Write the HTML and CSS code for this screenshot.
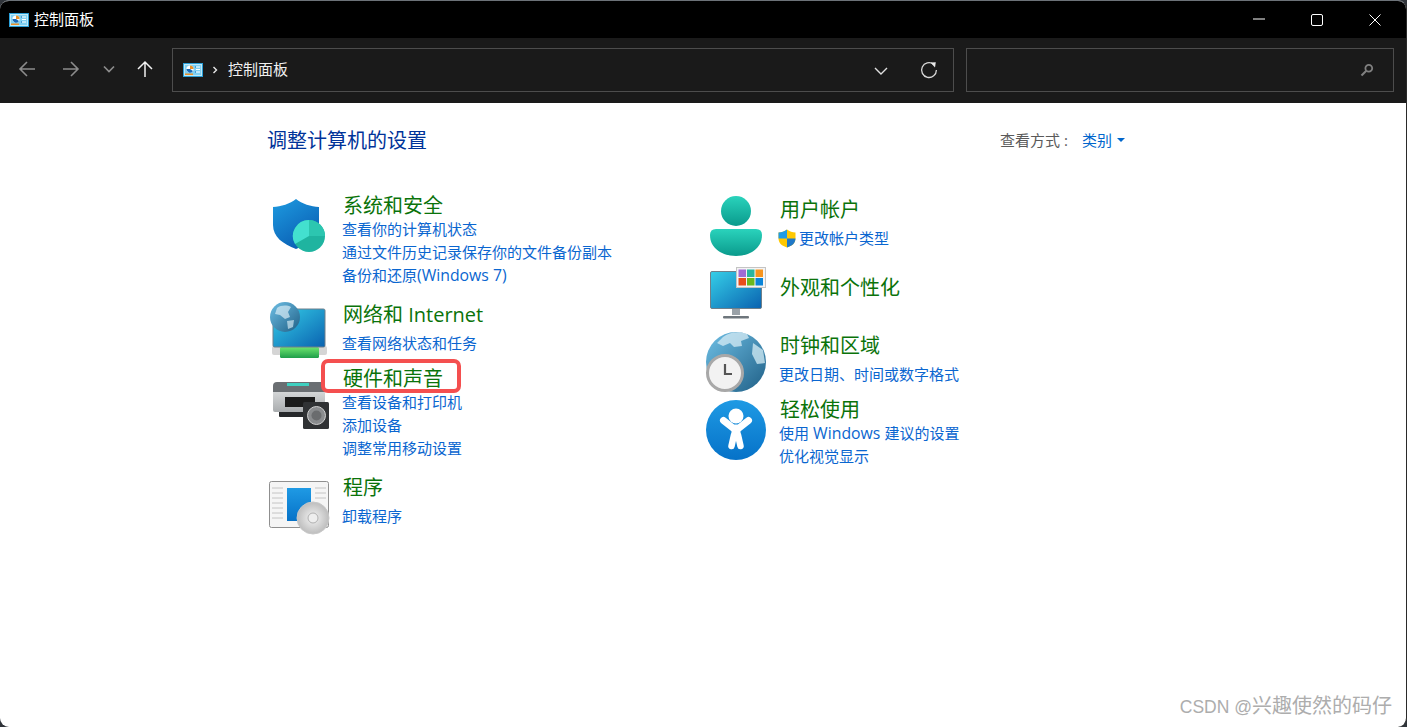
FILE: index.html
```html
<!DOCTYPE html>
<html lang="zh-CN">
<head>
<meta charset="utf-8">
<title>控制面板</title>
<link rel="stylesheet" href="styles.css">
</head>
<body>
<svg class="defs" width="0" height="0">
  <defs>
    <symbol id="cp" viewBox="0 0 20 14">
      <rect x="0.5" y="0.5" width="19" height="13" fill="#bfe9f8" stroke="#2a9fd8"/>
      <rect x="2" y="2" width="16" height="10" fill="#7fd0f2"/>
      <circle cx="7" cy="6" r="3.6" fill="#fff"/>
      <path d="M7 6V2.4A3.6 3.6 0 0 1 10.6 6Z" fill="#e8902a"/>
      <path d="M7 6H3.4A3.6 3.6 0 0 0 10 8Z" fill="#1668b8"/>
      <rect x="2" y="10.5" width="8" height="1.5" fill="#e8902a"/>
      <path d="M13 4h4M13 6.5h4M13 9h4" stroke="#fff"/>
      <path d="M12 4h1M12 9h1" stroke="#1668b8"/>
    </symbol>
    <linearGradient id="gShield" x1="0" y1="0" x2="0.6" y2="1"><stop offset="0" stop-color="#1e9be0"/><stop offset="1" stop-color="#0a5fb4"/></linearGradient>
    <linearGradient id="gTeal" x1="0" y1="0" x2="0" y2="1"><stop offset="0" stop-color="#2ad3bc"/><stop offset="1" stop-color="#0a9a8c"/></linearGradient>
    <linearGradient id="gScreen" x1="0" y1="0" x2="1" y2="1"><stop offset="0" stop-color="#35cfe8"/><stop offset="1" stop-color="#0a62b0"/></linearGradient>
    <linearGradient id="gGlobe" x1="0" y1="0" x2="1" y2="1"><stop offset="0" stop-color="#6fc0e6"/><stop offset="1" stop-color="#1f5f86"/></linearGradient>
    <linearGradient id="gBlue" x1="0" y1="0" x2="0" y2="1"><stop offset="0" stop-color="#1f9ae4"/><stop offset="1" stop-color="#0672c8"/></linearGradient>
    <linearGradient id="gGreen" x1="0" y1="0" x2="0" y2="1"><stop offset="0" stop-color="#6ee66e"/><stop offset="1" stop-color="#1f9e4a"/></linearGradient>
    <linearGradient id="gBody" x1="0" y1="0" x2="0" y2="1"><stop offset="0" stop-color="#d8dadb"/><stop offset="1" stop-color="#a9acae"/></linearGradient>
    <radialGradient id="gCd"><stop offset="0" stop-color="#f4f4f4"/><stop offset="1" stop-color="#bdbdbd"/></radialGradient>
  </defs>
</svg>
<div class="window">
  <header class="titlebar">
    <svg class="cp-icon"><use href="#cp"/></svg>
    <span class="title-text">控制面板</span>
    <div class="win-controls">
      <svg class="wc" viewBox="0 0 14 14"><path d="M1 6H13" stroke="#fff"/></svg>
      <svg class="wc" viewBox="0 0 14 14"><rect x="1.5" y="1.5" width="11" height="11" rx="1.5" fill="none" stroke="#fff"/></svg>
      <svg class="wc" viewBox="0 0 14 14"><path d="M1.5 1.5L12.5 12.5M12.5 1.5L1.5 12.5" stroke="#fff"/></svg>
    </div>
  </header>
  <nav class="navbar">
    <div class="nav-buttons">
      <svg class="nav-ico" viewBox="0 0 18 18"><path d="M17 9H2M9 2L2 9L9 16" fill="none" stroke="#8c8c8c" stroke-width="1.6"/></svg>
      <svg class="nav-ico" viewBox="0 0 18 18"><path d="M1 9H16M9 2L16 9L9 16" fill="none" stroke="#8c8c8c" stroke-width="1.6"/></svg>
      <svg class="nav-ico small" viewBox="0 0 12 12"><path d="M1 3.5L6 8.5L11 3.5" fill="none" stroke="#8c8c8c" stroke-width="1.7"/></svg>
      <svg class="nav-ico" viewBox="0 0 18 18"><path d="M9 17V2M2 9L9 2L16 9" fill="none" stroke="#f2f2f2" stroke-width="1.5"/></svg>
    </div>
    <div class="address">
      <svg class="cp-icon addr-icon"><use href="#cp"/></svg>
      <svg class="crumb" viewBox="0 0 6 8"><path d="M1.5 1L4.5 4L1.5 7" fill="none" stroke="#e8e8e8" stroke-width="1.4"/></svg>
      <span class="addr-text">控制面板</span>
      <svg class="addr-drop" viewBox="0 0 14 8"><path d="M1 1L7 7L13 1" fill="none" stroke="#e0e0e0" stroke-width="1.4"/></svg>
      <svg class="addr-refresh" viewBox="0 0 18 18"><path d="M13.5 3.2A7.4 7.4 0 1 0 16.4 9" fill="none" stroke="#d8d8d8" stroke-width="1.3"/><path d="M10.5 1.5L15.8 1.2L15 6.4Z" fill="#e8e8e8"/></svg>
    </div>
    <div class="search">
      <svg class="search-ico" viewBox="0 0 14 14"><circle cx="8.8" cy="5.2" r="3.4" fill="none" stroke="#808080" stroke-width="1.8"/><path d="M6.3 7.7L1.5 12.5" stroke="#808080" stroke-width="2"/></svg>
    </div>
  </nav>
  <main class="content">
    <div class="head-row">
      <h1 class="page-title">调整计算机的设置</h1>
      <div class="view-by">
        <span class="view-label">查看方式<span class="colon">:</span></span>
        <a class="view-link">类别</a>
        <span class="view-caret"></span>
      </div>
    </div>
    <div class="columns">
      <section class="col col-left">
        <article class="item">
          <div class="icon"><svg viewBox="0 0 75 70">
            <path d="M29 6C23 11 14 13.500 6 14V32C6 44 16 51 29 56C42 51 52 44 52 32V14C44 13.500 35 11 29 6Z" fill="url(#gShield)"/>
            <circle cx="42" cy="43" r="16" fill="#1fb4a0"/>
            <path d="M42 43V27A16 16 0 0 0 28 51Z" fill="#43e0cf"/>
            <path d="M42 43V27A16 16 0 0 1 58 43Z" fill="#2cc6b0"/>
          </svg></div>
          <div class="text">
            <a class="heading">系统和安全</a>
            <a class="link">查看你的计算机状态</a>
            <a class="link">通过文件历史记录保存你的文件备份副本</a>
            <a class="link">备份和还原<span class="latin">(Windows 7)</span></a>
          </div>
        </article>
        <article class="item single gap16">
          <div class="icon"><svg viewBox="0 0 75 70">
            <rect x="5" y="44" width="55" height="9" rx="2" fill="#d5d5d5"/>
            <rect x="13" y="45" width="39" height="11" rx="1.500" fill="url(#gGreen)"/>
            <rect x="6" y="7" width="52" height="38" rx="1.500" fill="url(#gScreen)" stroke="#6f7f8a"/>
            <circle cx="18" cy="15" r="15" fill="url(#gGlobe)"/>
            <path d="M10 6C14 3 20 3 24 5L21 10L23 15L18 17L13 13L8 12Z" fill="#e4f3fa" opacity=".65"/>
            <path d="M20 19L27 18L26 25L21 27Z" fill="#dceef6" opacity=".65"/>
          </svg></div>
          <div class="text">
            <a class="heading">网络和 Internet</a>
            <a class="link">查看网络状态和任务</a>
          </div>
        </article>
        <article class="item gap12">
          <div class="icon"><svg viewBox="0 0 75 70">
            <rect x="12" y="44" width="40" height="7" rx="1" fill="#26282a"/>
            <rect x="6" y="24" width="52" height="22" rx="2" fill="url(#gBody)"/>
            <path d="M6 26V20Q6 16 10 16H54Q58 16 58 20V26Z" fill="#6a6e72"/>
            <rect x="20" y="17" width="22" height="3" fill="#3fd0c0"/>
            <rect x="18" y="31" width="30" height="10" fill="#1c1c1c"/>
            <rect x="36" y="36" width="26" height="27" rx="1.500" fill="#303234"/>
            <circle cx="49.500" cy="49.500" r="9" fill="#8a8c8e" stroke="#d0d0d0"/>
            <circle cx="49.500" cy="49.500" r="5" fill="#6a6c6e"/>
          </svg></div>
          <div class="text">
            <a class="heading">硬件和声音<span class="marker"></span></a>
            <a class="link">查看设备和打印机</a>
            <a class="link">添加设备</a>
            <a class="link">调整常用移动设置</a>
          </div>
        </article>
        <article class="item single gap16">
          <div class="icon"><svg viewBox="0 0 75 70">
            <rect x="2.500" y="6.500" width="59" height="46" rx="2" fill="#f5f5f5" stroke="#8f8f8f"/>
            <path d="M5 13H16M5 18H16M5 23H16M5 28H16M5 33H16M5 38H16M5 43H16M48 13H59M48 18H59M48 23H59" stroke="#c4c4c4"/>
            <rect x="20" y="13" width="24" height="33" fill="url(#gBlue)"/>
            <circle cx="46" cy="43" r="16" fill="url(#gCd)" stroke="#c8c8c8"/>
            <circle cx="46" cy="43" r="5" fill="#eee" stroke="#b0b0b0"/>
          </svg></div>
          <div class="text">
            <a class="heading">程序</a>
            <a class="link">卸载程序</a>
          </div>
        </article>
      </section>
      <section class="col col-right">
        <article class="item single">
          <div class="icon"><svg viewBox="0 0 75 70">
            <circle cx="31" cy="14" r="15" fill="url(#gTeal)"/>
            <path d="M5 38Q5 32 11 32H51Q57 32 57 38C57 52 44 59 31 59C18 59 5 52 5 38Z" fill="url(#gTeal)"/>
          </svg></div>
          <div class="text">
            <a class="heading">用户帐户</a>
            <a class="link has-icon"><svg class="uac" viewBox="0 0 18 19"><path d="M9 0.500C6.500 2.500 3.500 3.300 0.500 3.500V9.500C0.500 14 4 17 9 18.500C14 17 17.500 14 17.500 9.500V3.500C14.500 3.300 11.500 2.500 9 0.500Z" fill="#ffc800"/><path d="M9 0.500V9.500H0.500V3.500C3.500 3.300 6.500 2.500 9 0.500Z" fill="#1f9be6"/><path d="M9 9.500V18.500C14 17 17.500 14 17.500 9.500Z" fill="#1f78c8"/></svg>更改帐户类型</a>
          </div>
        </article>
        <article class="item heading-only gap26">
          <div class="icon"><svg viewBox="0 0 75 70">
            <rect x="5.500" y="-3.500" width="51" height="37" rx="1.500" fill="url(#gScreen)" stroke="#6f7f8a"/>
            <rect x="27" y="34" width="8" height="6" fill="#9aa2a8"/>
            <rect x="18" y="41" width="26" height="2.500" rx="1" fill="#6e767c"/>
            <rect x="31.500" y="-7.500" width="29" height="20" fill="#f4f4f4" stroke="#c4c4c4"/>
            <rect x="33.500" y="-5.500" width="7.500" height="7.500" fill="#a06cd5"/>
            <rect x="42" y="-5.500" width="7.500" height="7.500" fill="#2ab5a0"/>
            <rect x="50.500" y="-5.500" width="7.500" height="7.500" fill="#f7941d"/>
            <rect x="33.500" y="3" width="7.500" height="7.500" fill="#e94e1b"/>
            <rect x="42" y="3" width="7.500" height="7.500" fill="#6ab81e"/>
            <rect x="50.500" y="3" width="7.500" height="7.500" fill="#0a84d8"/>
          </svg></div>
          <div class="text">
            <a class="heading">外观和个性化</a>
          </div>
        </article>
        <article class="item single gap34">
          <div class="icon"><svg viewBox="0 0 75 70">
            <circle cx="31" cy="29" r="30" fill="url(#gGlobe)"/>
            <path d="M18 4C24 -1 34 -2 42 1L44 5L36 8L37 13L29 14L25 10L18 13L12 10Z" fill="#dff1f8" opacity=".7"/>
            <path d="M48 10L58 17L60 30L52 31L47 21Z" fill="#d6edf6" opacity=".75"/>
            <circle cx="20" cy="40" r="17.500" fill="#f2f2f2" stroke="#a8a8a8" stroke-width="3"/>
            <path d="M20 31V41H27" fill="none" stroke="#555" stroke-width="2.200"/>
          </svg></div>
          <div class="text">
            <a class="heading">时钟和区域</a>
            <a class="link">更改日期、时间或数字格式</a>
          </div>
        </article>
        <article class="item gap12">
          <div class="icon"><svg viewBox="0 0 75 70">
            <circle cx="31" cy="33" r="30" fill="url(#gBlue)"/>
            <circle cx="31" cy="19" r="7.500" fill="#fff"/>
            <path d="M18.500 23.500L28 31H34L43.500 23.500" fill="none" stroke="#fff" stroke-width="7" stroke-linecap="round" stroke-linejoin="round"/>
            <path d="M31 30V38" fill="none" stroke="#fff" stroke-width="9"/>
            <path d="M29 38L26.500 49M33 38L35.500 49" fill="none" stroke="#fff" stroke-width="6.500" stroke-linecap="round"/>
          </svg></div>
          <div class="text">
            <a class="heading">轻松使用</a>
            <a class="link">使用<span class="latin"> Windows </span>建议的设置</a>
            <a class="link">优化视觉显示</a>
          </div>
        </article>
      </section>
    </div>
    <div class="watermark"><span class="wm-latin">CSDN @</span>兴趣使然的码仔</div>
  </main>
</div>
</body>
</html>
```
FILE: styles.css
```css
* { box-sizing: border-box; }
html, body { margin: 0; height: 100%; }
body {
  background: #30343a;
  font-family: "Open Sans", "Noto Sans CJK SC", sans-serif;
  overflow: hidden;
}
.defs { display: block; height: 0; }
.window {
  height: 727px;
  display: flex;
  flex-direction: column;
  border-top: 1px solid #6c7278;
  border-right: 1px solid #2a2a2a;
  border-radius: 9px;
  overflow: hidden;
  background: #fff;
}
.titlebar {
  flex: 0 0 37px;
  background: #000;
  display: flex;
  align-items: center;
  padding-left: 9px;
  color: #fff;
}
.cp-icon { width: 20px; height: 14px; flex: none; }
.title-text { margin-left: 5px; font-size: 15px; line-height: 20px; margin-bottom: 2px; }
.win-controls {
  margin-left: auto;
  display: flex;
  gap: 44px;
  margin-right: 24px;
}
.wc { width: 14px; height: 14px; display: block; flex: none; }
.navbar {
  flex: 0 0 65px;
  background: #1a1a1a;
  display: flex;
  align-items: flex-start;
  padding: 10px 13px 0 18px;
}
.nav-buttons {
  display: flex;
  align-items: center;
  flex: 0 0 154px;
  min-width: 0;
  height: 42px;
}
.nav-ico { flex: none; width: 18px; height: 18px; display: block; margin-right: 26px; }
.nav-ico.small { width: 12px; height: 12px; margin-left: -3px; margin-right: 21px; }
.nav-ico:last-child { margin-right: 0; }
.address {
  flex: 0 0 782px;
  height: 44px;
  border: 1px solid #4d4d4d;
  display: flex;
  align-items: center;
  padding-left: 10px;
  color: #f0f0f0;
}
.addr-icon { margin-bottom: 1px; }
.crumb { width: 6px; height: 8px; margin-left: 9px; }
.addr-text { margin-left: 10px; font-size: 15px; margin-bottom: 3px; }
.addr-drop { width: 14px; height: 8px; margin-left: auto; margin-top: 2px; }
.addr-refresh { width: 18px; height: 18px; margin-left: 32px; margin-right: 15px; }
.search {
  flex: 0 0 428px;
  height: 44px;
  margin-left: 12px;
  border: 1px solid #4d4d4d;
  display: flex;
  align-items: center;
  justify-content: flex-end;
  padding-right: 19px;
}
.search-ico { width: 14px; height: 14px; }
.content {
  flex: 1;
  position: relative;
  padding: 23px 0 0 267px;
}
.head-row {
  width: 858px;
  display: flex;
  justify-content: space-between;
  align-items: center;
  height: 28px;
}
.page-title {
  margin: 2px 0 0;
  font-size: 20px;
  font-weight: 400;
  line-height: 28px;
  color: #003399;
}
.view-by { display: flex; align-items: center; font-size: 15px; margin-bottom: 2px; }
.view-label { color: #5a5a5a; }
.colon { margin-left: 4px; }
.view-link { color: #0066cc; margin-left: 14px; }
.view-caret {
  margin-left: 5px;
  margin-top: 1px;
  border: 4px solid transparent;
  border-top: 4px solid #0066cc;
  border-bottom: 0;
}
.columns {
  display: flex;
  margin-top: 39px;
}
.col-left { width: 438px; }
.col-right { padding-top: 4px; }
.item { display: flex; }
.col-left .icon { flex: 0 0 75px; }
.col-right .icon { flex: 0 0 74px; margin-right: -1px; }
.icon { height: 0; }
.icon svg { display: block; width: 75px; height: 70px; overflow: visible; }
.text { display: flex; flex-direction: column; align-items: flex-start; }
.heading {
  position: relative;
  font-size: 20px;
  line-height: 24px;
  height: 24px;
  padding: 1px 0 0 1px;
  color: #0a730a;
}
.link {
  display: block;
  font-size: 15px;
  line-height: 23px;
  height: 23px;
  padding-top: 1px;
  color: #0a66d0;
}
.link.has-icon { display: flex; align-items: center; padding-top: 2px; }
.latin { font-size: 15.800px; }
.single .heading { margin-bottom: 5px; }
.heading-only .heading { margin-bottom: 0; }
.gap12 { margin-top: 12px; }
.gap16 { margin-top: 16px; }
.gap26 { margin-top: 26px; }
.gap34 { margin-top: 34px; }
.uac { width: 18px; height: 19px; margin: -1px 3px 0 -1px; flex: none; }
.marker {
  position: absolute;
  left: -21px;
  top: -7px;
  width: 140px;
  height: 34px;
  border: 4px solid #f44f4f;
  border-radius: 7px;
}
.watermark {
  position: absolute;
  right: 14px;
  bottom: 6px;
  font-family: "Liberation Sans", "Noto Sans CJK SC", sans-serif;
  font-size: 20px;
  line-height: 28px;
  color: #adadad;
}
.wm-latin { font-size: 17.500px; }
```
